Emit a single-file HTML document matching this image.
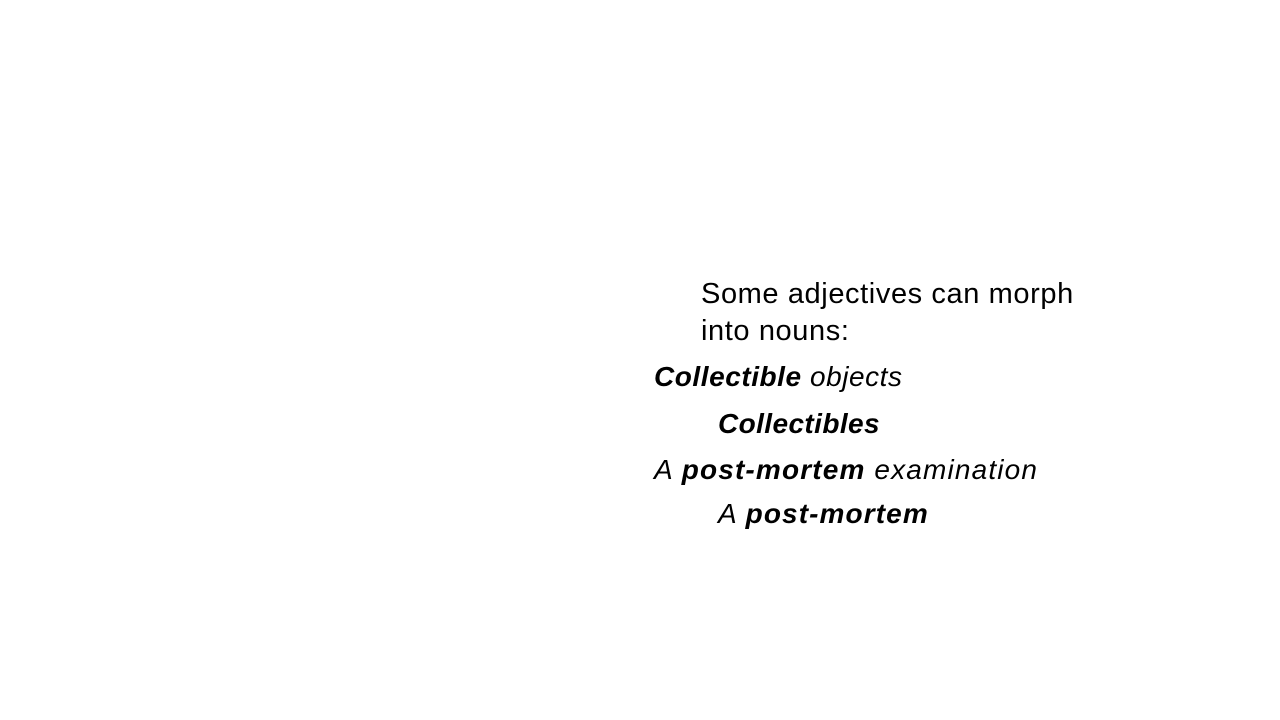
<!DOCTYPE html>
<html><head><meta charset="utf-8"><style>
body{margin:0;width:1280px;height:720px;background:#fff;position:relative;overflow:hidden;font-family:"Liberation Sans",sans-serif;color:#000}
div{position:absolute;white-space:nowrap;line-height:30px}
.i{font-style:italic}
</style></head><body>
<div style="left:701px;top:279px;font-size:29px;letter-spacing:0.6px">Some adjectives can morph</div>
<div style="left:701px;top:316px;font-size:29px;letter-spacing:0.6px">into nouns:</div>
<div class="i" style="left:654px;top:362px;font-size:28px;letter-spacing:0.55px"><b>Collectible</b> objects</div>
<div class="i" style="left:718px;top:409px;font-size:28px;letter-spacing:0.4px"><b>Collectibles</b></div>
<div class="i" style="left:654px;top:455px;font-size:28px;letter-spacing:1.15px">A <b>post-mortem</b> examination</div>
<div class="i" style="left:718px;top:499px;font-size:28px;letter-spacing:1.1px">A <b>post-mortem</b></div>
</body></html>
